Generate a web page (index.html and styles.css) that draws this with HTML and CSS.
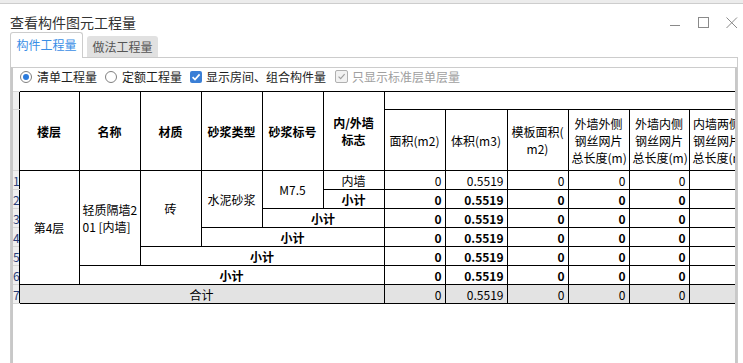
FILE: index.html
```html
<!DOCTYPE html>
<html lang="zh-CN">
<head>
    <meta charset="UTF-8">
    <title>查看构件图元工程量</title>
    <link rel="stylesheet" href="styles.css">
</head>
<body>
    <div class="top-strip"></div>

    <div class="title-bar">
        <div class="title">查看构件图元工程量</div>
        <svg class="win-ctrl" width="70" height="14" viewBox="0 0 70 14">
            <path d="M2 9.5H12"/>
            <rect x="30.5" y="1.5" width="10" height="10"/>
            <path d="M58.5 1.5L69 12M69 1.5L58.5 12"/>
        </svg>
    </div>

    <div class="tabs">
        <div class="tab active">构件工程量</div>
        <div class="tab">做法工程量</div>
    </div>

    <div class="panel">
        <div class="inner">
            <!-- 选项 -->
            <div class="options">
                <label class="opt"><span class="radio on"></span>清单工程量</label>
                <label class="opt"><span class="radio"></span>定额工程量</label>
                <label class="opt"><span class="check on"><svg viewBox="0 0 12 12"><path d="M2.6 6.1L5 8.6L9.6 3.4"/></svg></span>显示房间、组合构件量</label>
                <label class="opt disabled"><span class="check"><svg viewBox="0 0 13 13"><path d="M3 6.6L5.5 9.1L10.2 3.8"/></svg></span>只显示标准层单层量</label>
            </div>

            <!-- 表格 -->
            <div class="grid-wrap">
                <table class="grid">
                    <colgroup>
                        <col class="w6">
                        <col class="w60">
                        <col class="w61">
                        <col class="w61">
                        <col class="w61">
                        <col class="w61">
                        <col class="w61">
                        <col class="w61">
                        <col class="w62">
                        <col class="w61">
                        <col class="w61">
                        <col class="w60">
                        <col class="w56">
                    </colgroup>
                    <thead>
                        <tr class="h1">
                            <td class="rn"></td>
                            <th rowspan="2">楼层</th>
                            <th rowspan="2">名称</th>
                            <th rowspan="2">材质</th>
                            <th rowspan="2">砂浆类型</th>
                            <th rowspan="2">砂浆标号</th>
                            <th rowspan="2" class="two">内/外墙<br>标志</th>
                            <th colspan="6" class="group"></th>
                        </tr>
                        <tr class="h2">
                            <td class="rn"></td>
                            <th class="sub">面积(m2)</th>
                            <th class="sub">体积(m3)</th>
                            <th class="sub">模板面积(<br>m2)</th>
                            <th class="sub">外墙外侧<br>钢丝网片<br>总长度(m)</th>
                            <th class="sub">外墙内侧<br>钢丝网片<br>总长度(m)</th>
                            <th class="sub">内墙两侧<br>钢丝网片<br>总长度(m)</th>
                        </tr>
                    </thead>
                    <tbody>
                        <tr>
                            <td class="rn">1</td>
                            <td rowspan="6">第4层</td>
                            <td rowspan="5" class="name">轻质隔墙2<br>01 [内墙]</td>
                            <td rowspan="4">砖</td>
                            <td rowspan="3">水泥砂浆</td>
                            <td rowspan="2">M7.5</td>
                            <td>内墙</td>
                            <td class="n">0</td>
                            <td class="n">0.5519</td>
                            <td class="n">0</td>
                            <td class="n">0</td>
                            <td class="n">0</td>
                            <td></td>
                        </tr>
                        <tr class="sum">
                            <td class="rn">2</td>
                            <td>小计</td>
                            <td class="n">0</td>
                            <td class="n">0.5519</td>
                            <td class="n">0</td>
                            <td class="n">0</td>
                            <td class="n">0</td>
                            <td></td>
                        </tr>
                        <tr class="sum">
                            <td class="rn">3</td>
                            <td colspan="2">小计</td>
                            <td class="n">0</td>
                            <td class="n">0.5519</td>
                            <td class="n">0</td>
                            <td class="n">0</td>
                            <td class="n">0</td>
                            <td></td>
                        </tr>
                        <tr class="sum">
                            <td class="rn">4</td>
                            <td colspan="3">小计</td>
                            <td class="n">0</td>
                            <td class="n">0.5519</td>
                            <td class="n">0</td>
                            <td class="n">0</td>
                            <td class="n">0</td>
                            <td></td>
                        </tr>
                        <tr class="sum">
                            <td class="rn">5</td>
                            <td colspan="4">小计</td>
                            <td class="n">0</td>
                            <td class="n">0.5519</td>
                            <td class="n">0</td>
                            <td class="n">0</td>
                            <td class="n">0</td>
                            <td></td>
                        </tr>
                        <tr class="sum">
                            <td class="rn">6</td>
                            <td colspan="5">小计</td>
                            <td class="n">0</td>
                            <td class="n">0.5519</td>
                            <td class="n">0</td>
                            <td class="n">0</td>
                            <td class="n">0</td>
                            <td></td>
                        </tr>
                        <tr class="total">
                            <td class="rn">7</td>
                            <td colspan="6">合计</td>
                            <td class="n">0</td>
                            <td class="n">0.5519</td>
                            <td class="n">0</td>
                            <td class="n">0</td>
                            <td class="n">0</td>
                            <td></td>
                        </tr>
                    </tbody>
                </table>
            </div>
        </div>
    </div>
</body>
</html>
```

FILE: styles.css
```css
* {
    margin: 0;
    padding: 0;
    box-sizing: border-box;
}

body {
    width: 743px;
    height: 363px;
    overflow: hidden;
    background: #fff;
    font-family: "Noto Sans CJK SC", "Noto Sans", sans-serif;
    font-size: 12px;
    color: #222;
}

.top-strip {
    height: 4px;
    background: #ececec;
    border-bottom: 1px solid #cdcdcd;
}

/* 标题栏 */
.title-bar {
    height: 28px;
    display: flex;
    justify-content: space-between;
    align-items: flex-start;
    padding: 0 5px 0 10px;
}

.title {
    padding-top: 8px;
    font-size: 14px;
    line-height: 20px;
    color: #333;
}

.win-ctrl {
    margin-top: 12px;
    fill: none;
    stroke: #8a8a8a;
    stroke-width: 1;
}

/* 页签 */
.tabs {
    height: 25px;
    display: flex;
    align-items: flex-end;
    gap: 4px;
    padding-left: 10px;
}

.tab {
    width: 71px;
    height: 21px;
    line-height: 21px;
    text-align: center;
    background: #e1e1e1;
    color: #555;
    border-radius: 3px 3px 0 0;
}

.tab.active {
    position: relative;
    z-index: 1;
    width: 73px;
    height: 26px;
    margin-bottom: -1px;
    line-height: 24px;
    background: #fff;
    color: #3a8ee6;
    border: 1px solid #ccc;
    border-bottom: none;
}

.panel {
    width: 728px;
    height: 306px;
    margin-left: 10px;
    padding-top: 9px;
    border: 1px solid #ccc;
    border-bottom: none;
}

.inner {
    height: 100%;
    border-top: 1px solid #ccc;
    border-left: 2px solid #c8c8c8;
    border-right: 2px solid #c8c8c8;
}

/* 选项 */
.options {
    height: 23px;
    display: flex;
    align-items: center;
    padding: 0 0 6px 7px;
}

.opt {
    display: flex;
    align-items: center;
    gap: 5px;
    margin-right: 8px;
    line-height: 17px;
    color: #1e1e1e;
}

.opt.disabled {
    gap: 4px;
    margin-left: 1px;
    color: #a0a0a0;
}

.radio {
    width: 12px;
    height: 12px;
    border: 1px solid #808080;
    border-radius: 50%;
    display: flex;
    align-items: center;
    justify-content: center;
}

.radio.on::after {
    content: "";
    width: 6px;
    height: 6px;
    border-radius: 50%;
    background: #2b7bdc;
}

.check {
    width: 13px;
    height: 13px;
    border: 1px solid #b0b0b0;
    border-radius: 2px;
    background: #f2f2f2;
    display: flex;
}

.check svg {
    width: 100%;
    height: 100%;
    fill: none;
    stroke: #a0a0a0;
    stroke-width: 1.4;
}

.check.on {
    width: 12px;
    height: 12px;
    margin-right: -1px;
    border: none;
    background: #3a7fd6;
}

.check.on svg {
    stroke: #fff;
    stroke-width: 1.7;
}

/* 表格 */
.grid-wrap {
    overflow: hidden;
}

.grid {
    width: 732px;
    border-collapse: collapse;
    table-layout: fixed;
}

.w6 { width: 6px; }
.w56 { width: 56px; }
.w60 { width: 60px; }
.w61 { width: 61px; }
.w62 { width: 62px; }

.grid th,
.grid td {
    border: 1px solid #000;
    padding: 0 3px;
    font-size: 12px;
    line-height: 17px;
    text-align: center;
    vertical-align: middle;
    white-space: nowrap;
    overflow: hidden;
    color: #000;
}

.grid th {
    font-weight: bold;
}

.grid th.sub {
    font-weight: normal;
}

.h1 > * {
    height: 18px;
}

.h2 > * {
    height: 61px;
}

.grid tbody td {
    height: 19px;
}

.grid .rn {
    padding: 0;
    border-color: #d6d6d6;
    border-left: none;
    border-right: none;
    background: #efefef;
    text-align: left;
    color: #2a3f7a;
}

.grid td.name {
    padding: 0 0 0 3px;
    text-align: left;
}

.grid td.n {
    text-align: right;
    padding-right: 3px;
}

.sum td {
    font-weight: bold;
}

.sum td.rn {
    font-weight: normal;
}

.total td {
    background: #e3e3e3;
}
```
